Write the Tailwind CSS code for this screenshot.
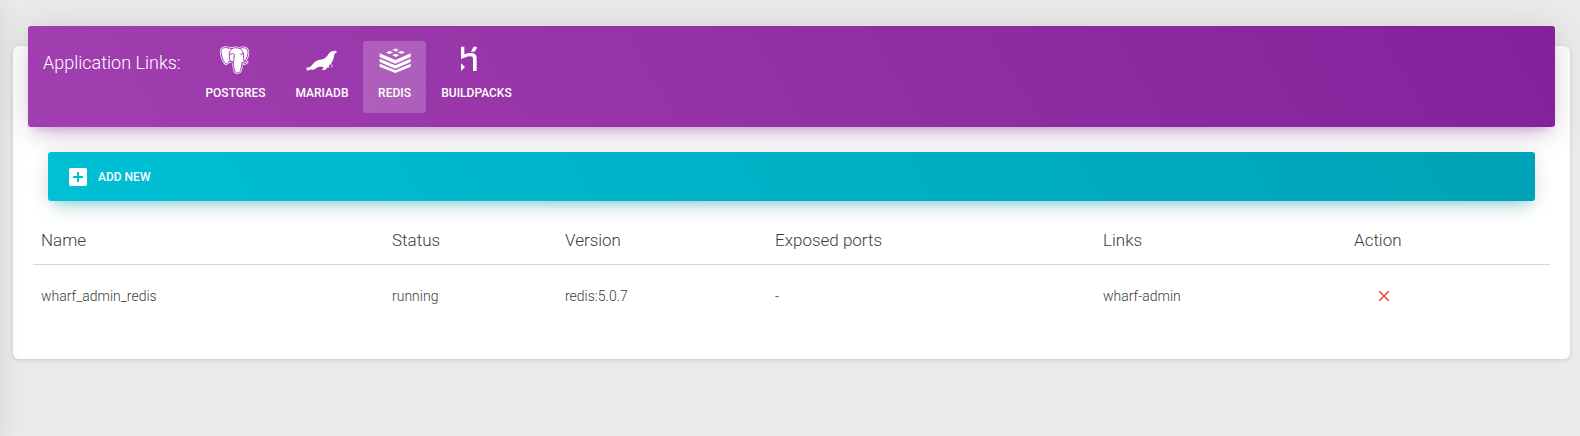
<!DOCTYPE html>
<html lang="en">
<head>
<meta charset="utf-8">
<title>Application Links</title>
<script src="https://cdn.jsdelivr.net/npm/@tailwindcss/browser@4"></script>
</head>
<body class="relative h-[436px] overflow-hidden bg-[#eaeaea] pt-[46px] pl-[13px] pr-[10px] font-[Roboto,sans-serif] text-[#3c3c3c]">
<main class="flow-root h-[313px] rounded-md bg-white px-[15px] shadow-[0_1px_4px_0_rgba(0,0,0,0.14)]">
  <header class="-mt-5 flex h-[101px] rounded-[3px] bg-[linear-gradient(60deg,#a23fb0,#82219a)] px-[15px] pt-[15px] text-white shadow-[0_12px_20px_-10px_rgba(156,39,176,0.28),0_4px_34px_0_rgba(0,0,0,0.13),0_7px_8px_-5px_rgba(156,39,176,0.2)]">
    <h1 class="w-[148px] pt-[8px] text-[18px] leading-[28px] font-light whitespace-nowrap">Application Links:</h1>
    <nav class="flex h-[72px] text-[12px] leading-[24px] font-medium">
      <a class="flex w-[89px] flex-col items-center">
        <svg class="mr-px h-[40px] w-[40px]" viewBox="0 0 120 120" fill="none" stroke-linejoin="round" stroke-linecap="round">
          <path stroke="#fff" stroke-width="7" d="M40 21C29 17 17 21 18 33c1 11 5 24 11 32 4 5 7 4 11-1l3-4 12 3c0 9 1 18 4 27 3 8 15 7 18-1 2-6 2-14 4-20 6 0 13-2 16-6-2-2-6-1-8-1 7-10 11-22 10-31-2-11-15-13-26-9-9-3-16-2-22 1-3-2-7-2-11-2z"/>
          <path fill="#fff" stroke="#9d3bae" stroke-width="3" d="M40 21C29 17 17 21 18 33c1 11 5 24 11 32 4 5 7 4 11-1l3-4 12 3c0 9 1 18 4 27 3 8 15 7 18-1 2-6 2-14 4-20 6 0 13-2 16-6-2-2-6-1-8-1 7-10 11-22 10-31-2-11-15-13-26-9-9-3-16-2-22 1-3-2-7-2-11-2z"/>
          <path stroke="#9d3bae" stroke-width="3" d="M50 24c-7 6-8 13-7 22-1 7 1 11 5 14M46 40c4-3 9-3 12 0 1 7-4 13-1 19-2 4-5 5-9 3M73 21c9 5 13 15 13 23-1 6-1 11 2 17M85 38c-4-1-8 0-8 3M79 66c3-2 6-3 9-4"/>
        </svg>
        <span>POSTGRES</span>
      </a>
      <a class="flex w-[83px] flex-col items-center">
        <svg class="mr-px h-[40px] w-[40px]" viewBox="0 0 120 120" fill="#fff"><path d="M17 88v-9c6 1 11-1 14-5l8-9c5-5 10-8 17-9 9 0 17-4 23-12 4-5 7-11 13-13 4-1 6-2 10-2l5 1-1 5-5 3c-2 5-2 12-5 18-3 9-8 14-13 19l3 5-6-1-7 7-10 2 5-9c-8-2-16-2-21 1-5 4-9 7-15 6-5-1-10 3-15 2z"/><path fill="none" stroke="#fff" stroke-width="2" d="M91 68l3 9-4 1"/><circle cx="99" cy="33" r="1.3" fill="#9d3bae"/></svg>
        <span class="ml-px">MARIADB</span>
      </a>
      <a class="flex w-[63px] flex-col items-center rounded-[3px] bg-white/20">
        <svg class="h-[40px] w-[40px]" viewBox="0 0 120 120" fill="#fff"><path d="M14 37l47 20 46-20v11L61 68 14 48zM14 53l47 20 46-20v10L61 83 14 63zM14 68l47 20 46-20v9L61 96 14 77zM61 22l3 3 9 1-7 3-3 3-4-3-8-2 7-2zM43 30l12 4-11 5-11-4zM79 30l11 4-11 5-11-5zM61 38l12 4-11 6-10-6z"/></svg>
        <span>REDIS</span>
      </a>
      <a class="flex w-[101px] flex-col items-center">
        <svg class="mr-[15px] h-[40px] w-[40px]" viewBox="0 0 120 120" fill="#fff"><path d="M36 17h10v23c5-2 12-4 19-4 13 0 18 6 18 15v39H72V53c0-5-3-7-8-7-11 0-22 6-28 9zM36 67l12 11-12 12zM73 17h11c-1 6-4 11-8 15H65c4-5 7-10 8-15z"/></svg>
        <span>BUILDPACKS</span>
      </a>
    </nav>
  </header>
  <div class="mx-5 mt-[25px] flex h-[49px] items-center rounded-[3px] bg-[linear-gradient(60deg,#00c0d5,#00a2b7)] pl-[18px] text-[12px] font-medium text-white shadow-[0_12px_20px_-10px_rgba(0,188,212,0.28),0_4px_20px_0_rgba(0,0,0,0.12),0_7px_8px_-5px_rgba(0,188,212,0.2)]">
    <svg class="mr-[8px] h-[24px] w-[24px]" viewBox="0 0 24 24" fill="#fff"><path d="M19 3H5a2 2 0 0 0-2 2v14c0 1.100.9 2 2 2h14c1.100 0 2-.9 2-2V5a2 2 0 0 0-2-2zm-2 10h-4v4h-2v-4H7v-2h4V7h2v4h4z"/></svg>
    <span>ADD NEW</span>
  </div>
  <section class="mx-[5px] mt-[16px] font-light">
    <div class="grid h-[48px] grid-cols-[351px_173px_210px_328px_251px_1fr] items-center border-b border-[#d6d6d6] pl-[8px] text-[17px]">
      <span>Name</span><span>Status</span><span>Version</span><span>Exposed ports</span><span>Links</span><span>Action</span>
    </div>
    <div class="grid h-[63px] grid-cols-[351px_173px_210px_328px_251px_1fr] items-center pl-[8px] text-[14px]">
      <span>wharf_admin_redis</span><span>running</span><span>redis:5.0.7</span><span>-</span><span>wharf-admin</span>
      <svg class="mb-px ml-[21px] h-[18px] w-[18px]" viewBox="0 0 24 24" fill="#f44336"><path d="M19 6.410L17.590 5 12 10.590 6.410 5 5 6.410 10.590 12 5 17.590 6.410 19 12 13.410 17.590 19 19 17.590 13.410 12z"/></svg>
    </div>
  </section>
</main>
<div class="pointer-events-none absolute inset-y-0 -left-5 w-5 shadow-[0_16px_38px_-12px_rgba(0,0,0,0.14),0_4px_25px_0_rgba(0,0,0,0.1)]"></div>
</body>
</html>
